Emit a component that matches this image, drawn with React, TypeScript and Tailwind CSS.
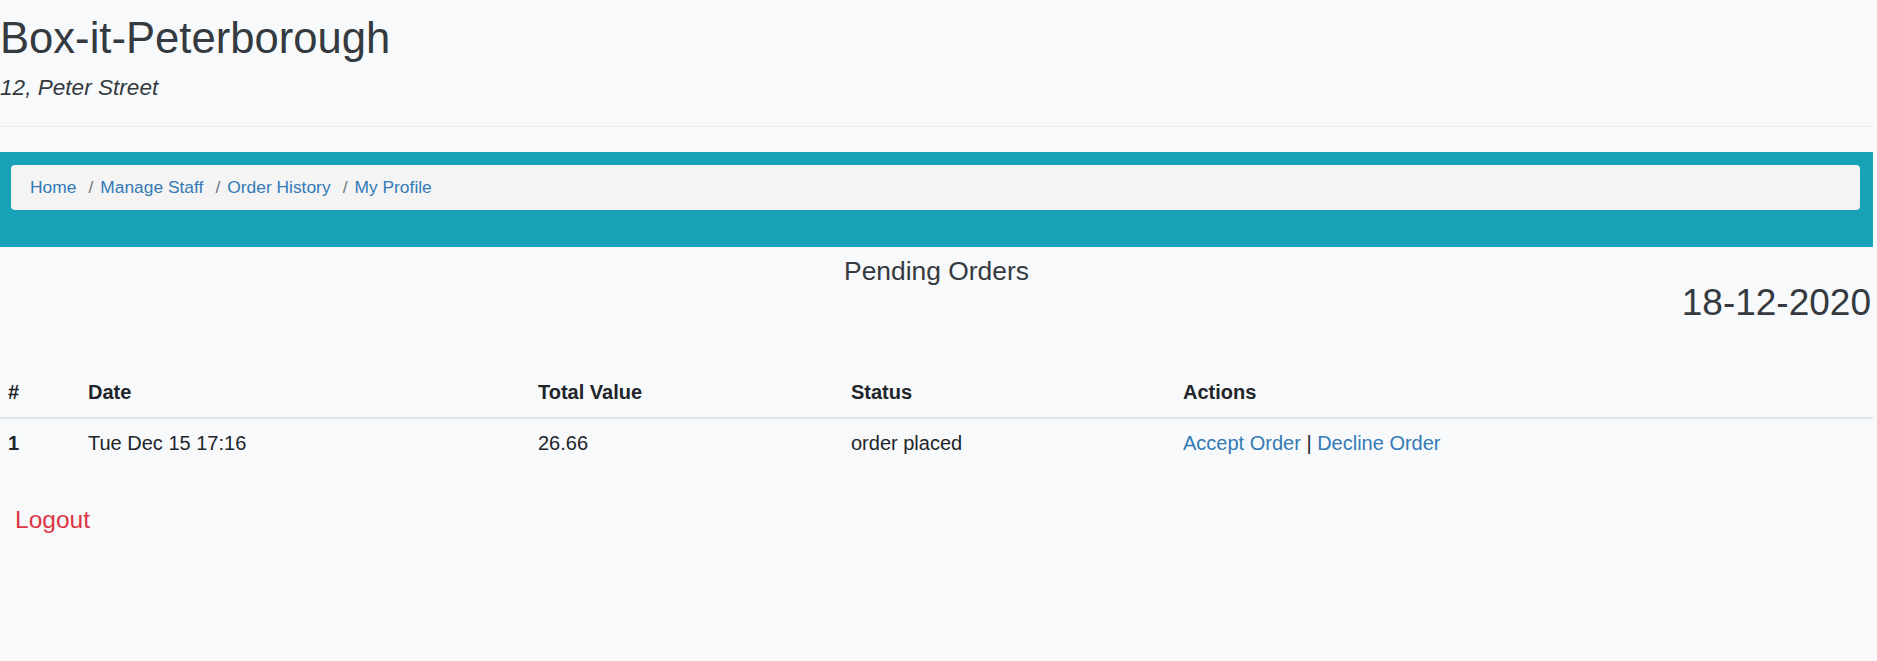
import React from 'react';

const crumbs = ['Home', 'Manage Staff', 'Order History', 'My Profile'];

const orders = [
  { id: 1, date: 'Tue Dec 15 17:16', total: '26.66', status: 'order placed' },
];

export default function App() {
  return (
    <div className="min-h-screen w-full bg-[#f8f9fa] font-['Liberation_Sans',Arial,sans-serif] text-[#212529]">
      <div className="w-[1873px]">
        {/* header */}
        <div className="pt-[12px]">
          <h1 className="text-[43.6px] leading-[1.2] text-[#343a40]">Box-it-Peterborough</h1>
          <p className="mt-[7.5px] text-[22.6px] italic leading-[1.45] text-[#343a40]">12, Peter Street</p>
        </div>
        <hr className="mt-[21px] border-0 border-t border-[#e9ecef]" />

        {/* nav */}
        <div className="mt-[25px] h-[95px] bg-[#18a2b8] pt-[13px] pl-[11px] pr-[13px]">
          <nav className="flex h-[45px] items-center rounded-[4px] bg-[#f4f4f4] px-[19px] text-[17.4px] leading-[1.5]">
            {crumbs.map((c, i) => (
              <React.Fragment key={c}>
                {i > 0 && <span className="ml-[12px] mr-[7px] text-[#6c757d]">/</span>}
                <a className="text-[#337ab7]">{c}</a>
              </React.Fragment>
            ))}
          </nav>
        </div>

        <h2 className="mt-[11px] text-center text-[26.4px] leading-none text-[#343a40]">Pending Orders</h2>
        <div className="pr-[2px] text-right text-[37px] leading-none text-[#343a40]">18-12-2020</div>

        {/* orders table */}
        <table className="mt-[47px] w-full table-fixed border-collapse text-left text-[20px] leading-[1.5]">
          <colgroup>
            <col className="w-[80px]" />
            <col className="w-[450px]" />
            <col className="w-[313px]" />
            <col className="w-[332px]" />
            <col />
          </colgroup>
          <thead>
            <tr className="border-b-2 border-[#dee2e6]">
              <th className="py-[9.5px] pl-[8px] font-bold">#</th>
              <th className="py-[9.5px] pl-[8px] font-bold">Date</th>
              <th className="py-[9.5px] pl-[8px] font-bold">Total Value</th>
              <th className="py-[9.5px] pl-[8px] font-bold">Status</th>
              <th className="py-[9.5px] pl-[8px] font-bold">Actions</th>
            </tr>
          </thead>
          <tbody>
            {orders.map((o) => (
              <tr key={o.id}>
                <th className="py-[9.5px] pl-[8px] font-bold">{o.id}</th>
                <td className="py-[9.5px] pl-[8px]">{o.date}</td>
                <td className="py-[9.5px] pl-[8px]">{o.total}</td>
                <td className="py-[9.5px] pl-[8px]">{o.status}</td>
                <td className="py-[9.5px] pl-[8px]">
                  <a className="text-[#337ab7]">Accept Order</a> | <a className="text-[#337ab7]">Decline Order</a>
                </td>
              </tr>
            ))}
          </tbody>
        </table>

        <div className="mt-[34px] pl-[15px] text-[24.5px] leading-[1.5]">
          <a className="text-[#dc3545]">Logout</a>
        </div>
      </div>
    </div>
  );
}
